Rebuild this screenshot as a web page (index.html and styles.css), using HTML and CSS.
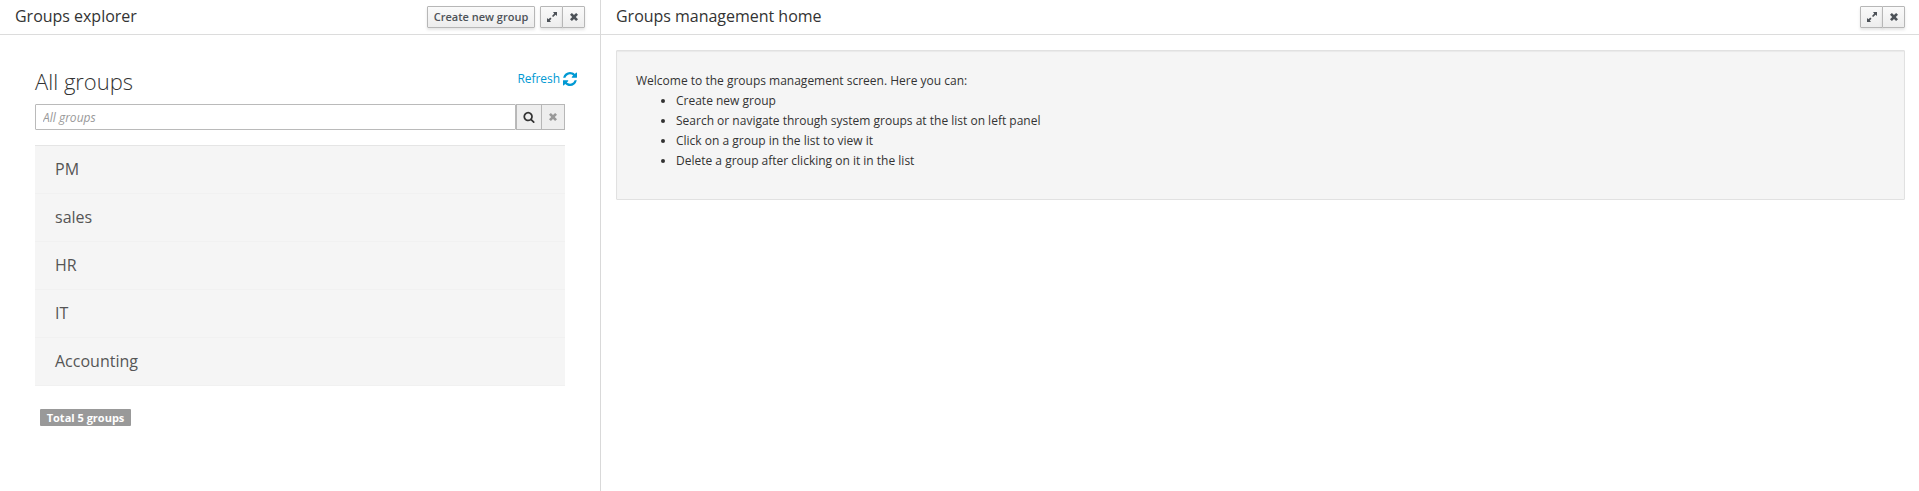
FILE: index.html
```html
<!DOCTYPE html>
<html lang="en">
<head>
<meta charset="utf-8">
<title>Groups management</title>
<link rel="stylesheet" href="styles.css">
</head>
<body>
<svg class="defs" width="0" height="0">
  <symbol id="expand" viewBox="0 0 10 10"><path d="M6 0H10V4L8.6 2.8 6.1 5.1 5 4 7.2 1.4zM0 10V6L1.4 7.2 3.3 5.5 4.5 6.7 2.8 8.6 4 10z"/></symbol>
  <symbol id="close" viewBox="0 0 8 8"><path d="M1.9 0 4 2.1 6.1 0 8 1.7 5.8 4 8 6.3 6.1 8 4 5.9 1.9 8 0 6.3 2.2 4 0 1.7z"/></symbol>
  <symbol id="search" viewBox="0 0 1792 1792"><path d="M1216 832q0-185-131.5-316.5t-316.5-131.5-316.5 131.5-131.5 316.5 131.5 316.5 316.5 131.5 316.5-131.5 131.5-316.5zm512 832q0 52-38 90t-90 38q-54 0-90-38l-343-342q-179 124-399 124-143 0-273.5-55.5t-225-150-150-225-55.5-273.5 55.5-273.5 150-225 225-150 273.5-55.5 273.5 55.5 225 150 150 225 55.5 273.5q0 220-124 399l343 343q37 37 37 90z"/></symbol>
  <symbol id="refresh" viewBox="128 128 1536 1536"><path d="M1639 1056q0 5-1 7-64 268-268 434.5t-478 166.5q-146 0-282.5-55t-243.5-157l-129 129q-19 19-45 19t-45-19-19-45v-448q0-26 19-45t45-19h448q26 0 45 19t19 45-19 45l-137 137q71 66 161 102t187 36q134 0 250-65t186-179q11-17 53-117 8-23 30-23h192q13 0 22.5 9.5t9.5 22.5zm25-800v448q0 26-19 45t-45 19h-448q-26 0-45-19t-19-45 19-45l138-138q-148-137-349-137-134 0-250 65t-186 179q-11 17-53 117-8 23-30 23h-199q-13 0-22.5-9.5t-9.5-22.5v-7q65-268 270-434.5t480-166.5q146 0 284 55.5t245 156.5l130-129q19-19 45-19t45 19 19 45z"/></symbol>
</svg>
<main class="layout">
  <section class="panel explorer">
    <header class="bar">
      <h1 class="title">Groups explorer</h1>
      <button class="btn create">Create new group</button>
      <div class="btn-group">
        <button class="btn tool" aria-label="Maximize"><svg class="i-expand"><use href="#expand"/></svg></button>
        <button class="btn tool" aria-label="Close"><svg class="i-close"><use href="#close"/></svg></button>
      </div>
    </header>
    <div class="content">
      <div class="heading">
        <h2 class="subtitle">All groups</h2>
        <a class="refresh">Refresh<svg class="i-refresh"><use href="#refresh"/></svg></a>
      </div>
      <div class="search">
        <input class="field" type="text" placeholder="All groups">
        <button class="addon find" aria-label="Search"><svg class="i-search"><use href="#search"/></svg></button>
        <button class="addon clear" aria-label="Clear"><svg class="i-close"><use href="#close"/></svg></button>
      </div>
      <ul class="groups">
        <li class="group">PM</li>
        <li class="group">sales</li>
        <li class="group">HR</li>
        <li class="group">IT</li>
        <li class="group">Accounting</li>
      </ul>
      <span class="total">Total 5 groups</span>
    </div>
  </section>
  <section class="panel home">
    <header class="bar">
      <h1 class="title">Groups management home</h1>
      <div class="btn-group">
        <button class="btn tool" aria-label="Maximize"><svg class="i-expand"><use href="#expand"/></svg></button>
        <button class="btn tool" aria-label="Close"><svg class="i-close"><use href="#close"/></svg></button>
      </div>
    </header>
    <div class="well">
      <p class="intro">Welcome to the groups management screen. Here you can:</p>
      <ul class="actions">
        <li>Create new group</li>
        <li>Search or navigate through system groups at the list on left panel</li>
        <li>Click on a group in the list to view it</li>
        <li>Delete a group after clicking on it in the list</li>
      </ul>
    </div>
  </section>
</main>
</body>
</html>
```
FILE: styles.css
```css
* { box-sizing: border-box; }
body {
  margin: 0;
  font: 12px/20px "Open Sans", sans-serif;
  color: #333;
  background: #fff;
  overflow: hidden;
}
h1, h2, p, ul { margin: 0; padding: 0; }
svg { display: block; fill: currentColor; }
.defs { position: absolute; }
.layout { display: grid; grid-template-columns: 600px 1fr; height: 491px; }
.home { border-left: 1px solid #d9d9d9; }
.bar {
  display: flex;
  align-items: flex-start;
  height: 35px;
  padding: 6px 15px 0;
  border-bottom: 1px solid #dcdcdc;
}
.home .bar { padding-right: 14px; }
.title { flex: 1; font-size: 16px; font-weight: 400; line-height: 20px; letter-spacing: -0.02px; }
.btn {
  height: 22px;
  padding: 0;
  font: 600 11px/20px "Open Sans", sans-serif;
  color: #4d5258;
  background: linear-gradient(#fafafa, #ededed);
  border: 1px solid #b7b7b7;
  border-radius: 1px;
  box-shadow: 0 2px 3px rgba(0, 0, 0, .1);
}
.create { width: 108px; margin-right: 5px; }
.btn-group { display: flex; }
.tool { display: flex; align-items: center; justify-content: center; width: 23px; }
.tool + .tool { margin-left: -1px; }
.i-expand { width: 10px; height: 10px; }
.i-close { width: 8px; height: 8px; }
.content { padding: 29px 35px 0; }
.heading { display: flex; justify-content: space-between; margin-right: -12px; height: 40px; }
.subtitle { font-size: 22px; font-weight: 300; line-height: 34px; }
.refresh { display: flex; gap: 3px; height: 20px; margin-top: 5px; color: #0099d3; letter-spacing: -0.06px; }
.i-refresh { width: 14px; height: 14px; margin-top: 3px; }
.search { display: flex; height: 26px; }
.field {
  width: 481px;
  padding: 3px 7px 1px;
  font: 12px/20px "Open Sans", sans-serif;
  border: 1px solid #bababa;
  border-radius: 1px;
}
.field::placeholder { color: #999; font-style: italic; opacity: 1; }
.addon {
  display: flex;
  align-items: center;
  justify-content: center;
  padding: 0;
  color: #333;
  background: #eee;
  border: 1px solid #b7b7b7;
}
.find { width: 26px; }
.clear { width: 24px; margin-left: -1px; color: #999; }
.i-search { width: 12px; height: 12px; }
.groups { margin-top: 15px; list-style: none; border-top: 1px solid #e5e5e5; }
.group {
  height: 48px;
  padding-left: 20px;
  font-size: 16px;
  line-height: 47px;
  color: #555;
  background: #f5f5f5;
  border-bottom: 1px solid #f1f1f1;
}
.total {
  display: block;
  width: 91px;
  height: 17px;
  margin: 23px 0 0 5px;
  font-size: 11px;
  font-weight: 700;
  line-height: 17px;
  text-align: center;
  color: #fff;
  background: #999;
  border-radius: 1px;
}
.well {
  height: 150px;
  margin: 15px 14px 0 15px;
  padding: 20px 19px 19px;
  background: #f5f5f5;
  border: 1px solid #e1e1e1;
  border-radius: 1px;
  box-shadow: inset 0 1px 1px rgba(0, 0, 0, .05);
}
.actions { padding-left: 40px; }
```
